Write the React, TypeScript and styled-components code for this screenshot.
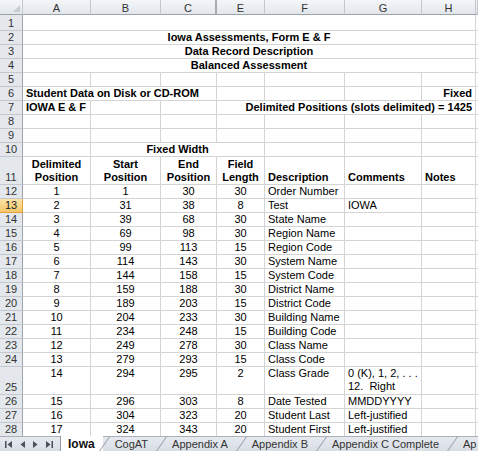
import React from "react";
import styled, { createGlobalStyle, css } from "styled-components";

const GlobalStyle = createGlobalStyle`
  html, body {
    margin: 0;
    padding: 0;
    background: #ffffff;
  }
  body {
    font-family: "Liberation Sans", Arial, sans-serif;
    font-size: 11px;
    color: #000;
  }
  * {
    box-sizing: border-box;
  }
`;

const COLS = "23px 68px 70px 56px 48px 80px 77px 54px 1fr";
const GRID = "#d4d4d4";

type Align = "left" | "center" | "right";

const Window = styled.div`
  width: 478px;
  height: 451px;
  display: flex;
  flex-direction: column;
  overflow: hidden;
  background: #fff;
`;

const Sheet = styled.div`
  flex: 1;
  overflow: hidden;
`;

const Row = styled.div<{ $h: number }>`
  display: grid;
  grid-template-columns: ${COLS};
  height: ${(p) => p.$h}px;
`;

const ColHead = styled.div<{ $thick?: boolean }>`
  display: flex;
  align-items: center;
  justify-content: center;
  background: linear-gradient(#f4f6f9, #e2e6eb);
  border-right: ${(p) => (p.$thick ? "2px solid #a6abb2" : "1px solid #c3c8ce")};
  border-bottom: 1px solid #9da3ab;
  color: #333;
  font-size: 11px;
  padding-top: 1px;
`;

const Corner = styled(ColHead)`
  position: relative;
  &::after {
    content: "";
    position: absolute;
    right: 2px;
    bottom: 2px;
    border-left: 7px solid transparent;
    border-bottom: 7px solid #c8ccd2;
  }
`;

const RowHead = styled.div<{ $sel?: boolean }>`
  display: flex;
  align-items: flex-end;
  justify-content: center;
  background: #e4e8ed;
  border-right: 1px solid #9da3ab;
  border-bottom: 1px solid #c3c8ce;
  color: #333;
  font-size: 11px;
  line-height: 13px;
  ${(p) =>
    p.$sel &&
    css`
      background: linear-gradient(#fbe3a9, #f5c869);
      border-right: 1px solid #e2a13c;
      border-bottom: 1px solid #e2a13c;
      color: #222;
    `}
`;

const Cell = styled.div<{
  $align?: Align;
  $bold?: boolean;
  $span?: string;
  $top?: boolean;
}>`
  display: flex;
  flex-direction: column;
  justify-content: ${(p) => (p.$top ? "flex-start" : "flex-end")};
  align-items: ${(p) =>
    p.$align === "center" ? "center" : p.$align === "right" ? "flex-end" : "flex-start"};
  text-align: ${(p) => p.$align || "left"};
  grid-column: ${(p) => p.$span || "auto"};
  border-right: 1px solid ${GRID};
  border-bottom: 1px solid ${GRID};
  padding: 0 3px 0 3px;
  line-height: 13px;
  white-space: nowrap;
  font-weight: ${(p) => (p.$bold ? 700 : 400)};
`;

const TabBar = styled.div`
  height: 15px;
  flex: 0 0 15px;
  display: flex;
  align-items: stretch;
  background: linear-gradient(#e6eaef, #d9dee5);
  border-top: 1px solid #a9b0b9;
`;

const NavGroup = styled.div`
  display: flex;
  align-items: center;
  gap: 4px;
  padding: 0 6px 0 4px;
  width: 60px;
  flex: 0 0 60px;
  color: #4a5059;
`;

const NavBtn = styled.span`
  display: flex;
  align-items: center;
  width: 10px;
  justify-content: center;
`;

const Tab = styled.div<{ $active?: boolean }>`
  position: relative;
  display: flex;
  align-items: center;
  font-size: 11px;
  color: #333;
  white-space: nowrap;
  margin-top: -1px;
  padding: 0 12px;
  ${(p) =>
    p.$active &&
    css`
      background: #fff;
      font-weight: 700;
      font-size: 12px;
      color: #111;
      border-left: 1px solid #8f98a3;
      padding: 0 8px 0 7px;
    `}
  &::after {
    content: "";
    position: absolute;
    right: -2px;
    top: 1px;
    bottom: 0;
    width: 1px;
    background: #8f98a3;
    transform: skewX(-35deg);
  }
`;

const FirstIcon = ({ flip }: { flip?: boolean }) => (
  <svg width="9" height="9" viewBox="0 0 9 9" style={{ transform: flip ? "scaleX(-1)" : undefined }}>
    <rect x="1" y="1" width="1.5" height="7" fill="currentColor" />
    <path d="M8 1 L3.5 4.5 L8 8 Z" fill="currentColor" />
  </svg>
);

const ArrowIcon = ({ flip }: { flip?: boolean }) => (
  <svg width="9" height="9" viewBox="0 0 9 9" style={{ transform: flip ? "scaleX(-1)" : undefined }}>
    <path d="M7 1 L2.5 4.5 L7 8 Z" fill="currentColor" />
  </svg>
);

const H = 14;

const data: [string, string, string, string, string, string?][] = [
  ["1", "1", "30", "30", "Order Number"],
  ["2", "31", "38", "8", "Test", "IOWA"],
  ["3", "39", "68", "30", "State Name"],
  ["4", "69", "98", "30", "Region Name"],
  ["5", "99", "113", "15", "Region Code"],
  ["6", "114", "143", "30", "System Name"],
  ["7", "144", "158", "15", "System Code"],
  ["8", "159", "188", "30", "District Name"],
  ["9", "189", "203", "15", "District Code"],
  ["10", "204", "233", "30", "Building Name"],
  ["11", "234", "248", "15", "Building Code"],
  ["12", "249", "278", "30", "Class Name"],
  ["13", "279", "293", "15", "Class Code"],
];

const tail: [string, string, string, string, string, string][] = [
  ["15", "296", "303", "8", "Date Tested", "MMDDYYYY"],
  ["16", "304", "323", "20", "Student Last", "Left-justified"],
  ["17", "324", "343", "20", "Student First", "Left-justified"],
];

const EmptyRow = ({ n, h = H }: { n: number; h?: number }) => (
  <Row $h={h}>
    <RowHead>{n}</RowHead>
    {Array.from({ length: 8 }).map((_, i) => (
      <Cell key={i} />
    ))}
  </Row>
);

const TitleRow = ({ n, h = H, text }: { n: number; h?: number; text?: string }) => (
  <Row $h={h}>
    <RowHead>{n}</RowHead>
    <Cell $span="2 / 9" $align="center" $bold>
      {text}
    </Cell>
    <Cell />
  </Row>
);

const DataRow = ({ n, d, top, h = H }: { n: number; d: (string | React.ReactNode)[]; top?: boolean; h?: number }) => (
  <Row $h={h}>
    <RowHead $sel={n === 13}>{n}</RowHead>
    <Cell $align="center" $top={top}>{d[0]}</Cell>
    <Cell $align="center" $top={top}>{d[1]}</Cell>
    <Cell $align="center" $top={top}>{d[2]}</Cell>
    <Cell $align="center" $top={top}>{d[3]}</Cell>
    <Cell $top={top}>{d[4]}</Cell>
    <Cell $top={top}>{d[5]}</Cell>
    <Cell />
    <Cell />
  </Row>
);

export default function App() {
  return (
    <Window>
      <GlobalStyle />
      <Sheet>
        <Row $h={15}>
          <Corner />
          <ColHead>A</ColHead>
          <ColHead>B</ColHead>
          <ColHead $thick>C</ColHead>
          <ColHead>E</ColHead>
          <ColHead>F</ColHead>
          <ColHead>G</ColHead>
          <ColHead>H</ColHead>
          <ColHead />
        </Row>
        <TitleRow n={1} h={16} />
        <TitleRow n={2} text="Iowa Assessments, Form E & F" />
        <TitleRow n={3} text="Data Record Description" />
        <TitleRow n={4} text="Balanced Assessment" />
        <EmptyRow n={5} />
        <Row $h={H}>
          <RowHead>6</RowHead>
          <Cell $span="2 / 5" $bold>
            Student Data on Disk or CD-ROM
          </Cell>
          <Cell />
          <Cell />
          <Cell />
          <Cell $align="right" $bold>
            Fixed
          </Cell>
          <Cell />
        </Row>
        <Row $h={H}>
          <RowHead>7</RowHead>
          <Cell $bold>IOWA E &amp; F</Cell>
          <Cell />
          <Cell />
          <Cell $span="5 / 9" $align="right" $bold>
            Delimited Positions (slots delimited) = 1425
          </Cell>
          <Cell />
        </Row>
        <EmptyRow n={8} />
        <EmptyRow n={9} />
        <Row $h={H}>
          <RowHead>10</RowHead>
          <Cell />
          <Cell $span="3 / 6" $align="center" $bold>
            Fixed Width
          </Cell>
          <Cell />
          <Cell />
          <Cell />
          <Cell />
        </Row>
        <Row $h={28}>
          <RowHead>11</RowHead>
          <Cell $align="center" $bold>
            <span>Delimited</span>
            <span>Position</span>
          </Cell>
          <Cell $align="center" $bold>
            <span>Start</span>
            <span>Position</span>
          </Cell>
          <Cell $align="center" $bold>
            <span>End</span>
            <span>Position</span>
          </Cell>
          <Cell $align="center" $bold>
            <span>Field</span>
            <span>Length</span>
          </Cell>
          <Cell $bold>Description</Cell>
          <Cell $bold>Comments</Cell>
          <Cell $bold>Notes</Cell>
          <Cell />
        </Row>
        {data.map((d, i) => (
          <DataRow key={i} n={12 + i} d={d} />
        ))}
        <DataRow
          n={25}
          h={28}
          top
          d={[
            "14",
            "294",
            "295",
            "2",
            "Class Grade",
            <>
              <span>0 (K), 1, 2, . . .</span>
              <span>12.&nbsp; Right</span>
            </>,
          ]}
        />
        {tail.map((d, i) => (
          <DataRow key={i} n={26 + i} d={d} />
        ))}
      </Sheet>
      <TabBar>
        <NavGroup>
          <NavBtn>
            <FirstIcon />
          </NavBtn>
          <NavBtn>
            <ArrowIcon />
          </NavBtn>
          <NavBtn>
            <ArrowIcon flip />
          </NavBtn>
          <NavBtn>
            <FirstIcon flip />
          </NavBtn>
        </NavGroup>
        <Tab $active>Iowa</Tab>
        <Tab>CogAT</Tab>
        <Tab>Appendix A</Tab>
        <Tab>Appendix B</Tab>
        <Tab>Appendix C Complete</Tab>
        <Tab>Ap</Tab>
      </TabBar>
    </Window>
  );
}
